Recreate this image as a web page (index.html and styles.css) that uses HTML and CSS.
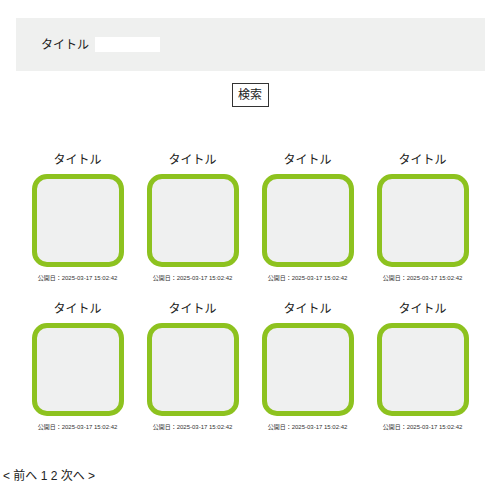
FILE: index.html
```html
<!DOCTYPE html>
<html lang="ja">
<head>
<meta charset="utf-8">
<link rel="stylesheet" href="styles.css">
</head>
<body>
<div class="search">
  <label class="search-label">タイトル</label>
  <input class="search-input" type="text">
</div>
<div class="actions">
  <button class="search-btn">検索</button>
</div>
<div class="grid">
  <div class="card"><div class="card-title">タイトル</div><div class="thumb"></div><div class="date">公開日：2025-03-17 15:02:42</div></div>
  <div class="card"><div class="card-title">タイトル</div><div class="thumb"></div><div class="date">公開日：2025-03-17 15:02:42</div></div>
  <div class="card"><div class="card-title">タイトル</div><div class="thumb"></div><div class="date">公開日：2025-03-17 15:02:42</div></div>
  <div class="card"><div class="card-title">タイトル</div><div class="thumb"></div><div class="date">公開日：2025-03-17 15:02:42</div></div>
  <div class="card"><div class="card-title">タイトル</div><div class="thumb"></div><div class="date">公開日：2025-03-17 15:02:42</div></div>
  <div class="card"><div class="card-title">タイトル</div><div class="thumb"></div><div class="date">公開日：2025-03-17 15:02:42</div></div>
  <div class="card"><div class="card-title">タイトル</div><div class="thumb"></div><div class="date">公開日：2025-03-17 15:02:42</div></div>
  <div class="card"><div class="card-title">タイトル</div><div class="thumb"></div><div class="date">公開日：2025-03-17 15:02:42</div></div>
</div>
<div class="pager">&lt; 前へ 1 2 次へ &gt;</div>
</body>
</html>
```

FILE: styles.css
```css
html, body {
  margin: 0;
  padding: 0;
  background: #ffffff;
}
body {
  font-family: "Liberation Sans", "Noto Sans CJK JP", sans-serif;
  color: #222222;
}
.search {
  margin: 18px 15px 0 16px;
  height: 53px;
  background: #eff0ef;
  display: flex;
  align-items: center;
  padding-left: 25px;
  gap: 6px;
}
.search-label {
  font-size: 12px;
  line-height: 16px;
}
.search-input {
  width: 65px;
  height: 15px;
  border: none;
  padding: 0;
  margin: 0;
  background: #ffffff;
  outline: none;
}
.actions {
  display: flex;
  justify-content: center;
  margin-top: 12px;
}
.search-btn {
  width: 37px;
  height: 24px;
  border: 1px solid #333333;
  background: #ffffff;
  font-family: inherit;
  font-size: 12px;
  line-height: 16px;
  padding: 0;
  color: #222222;
}
.grid {
  margin-top: 45px;
  display: grid;
  grid-template-columns: repeat(4, 115px);
  justify-content: center;
  row-gap: 19px;
}
.card {
  display: flex;
  flex-direction: column;
  align-items: center;
}
.card-title {
  font-size: 12px;
  line-height: 16px;
  margin-bottom: 6px;
}
.thumb {
  width: 92px;
  height: 93px;
  box-sizing: border-box;
  border: 5px solid #8dc21f;
  border-radius: 15px;
  background: #eff0f0;
}
.date {
  margin-top: 7px;
  font-size: 6px;
  line-height: 8px;
  color: #333333;
  white-space: nowrap;
}
.pager {
  margin-top: 37px;
  padding-left: 3px;
  font-size: 12px;
  line-height: 16px;
}
```
